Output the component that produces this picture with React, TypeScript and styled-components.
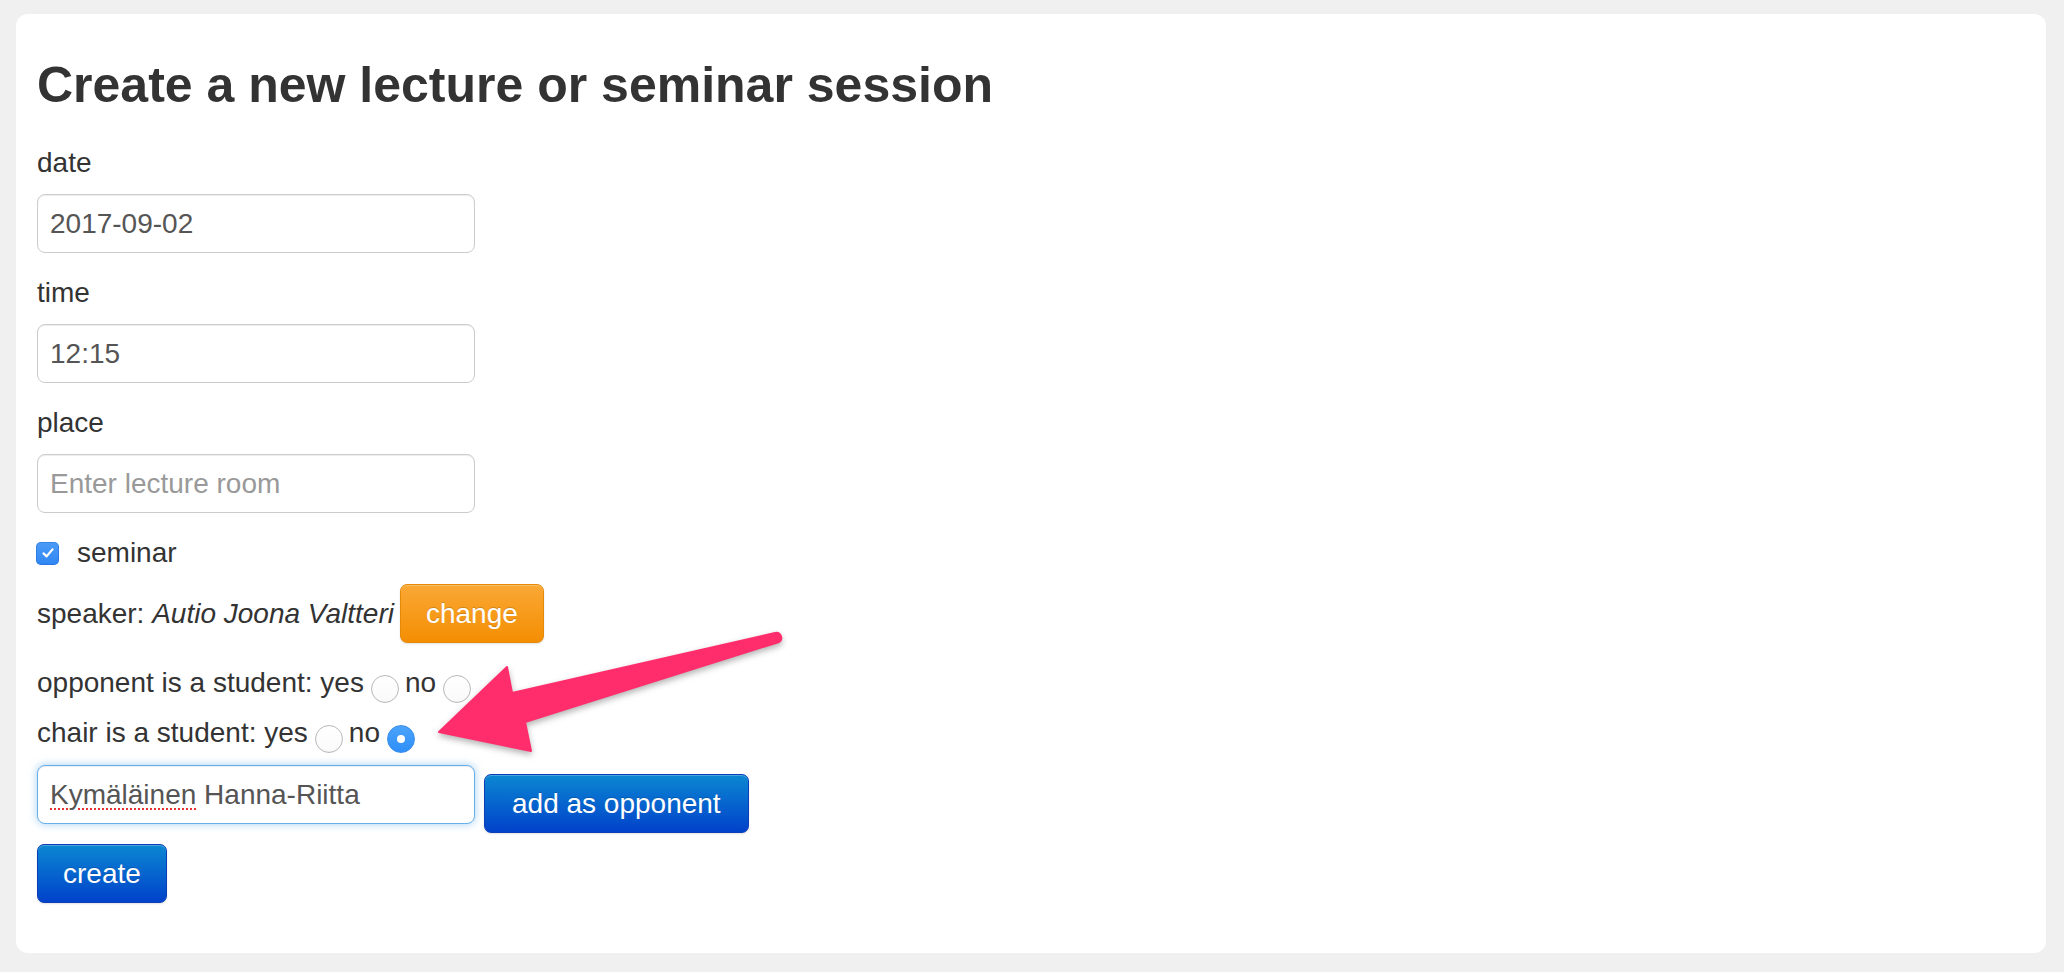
import React from "react";
import styled, { createGlobalStyle } from "styled-components";

const Global = createGlobalStyle`
  html, body {
    margin: 0;
    padding: 0;
    background: #f0f0f0;
  }
  body {
    font-family: "Liberation Sans", Arial, Helvetica, sans-serif;
    color: #333;
    font-size: 28px;
  }
  * { box-sizing: border-box; }
`;

const Page = styled.div`
  padding: 14px 18px 19px 16px;
`;

const Card = styled.div`
  position: relative;
  background: #fff;
  border-radius: 12px;
  padding: 44px 21px 50px 21px;
`;

const Title = styled.h1`
  margin: 0 0 30px 0;
  font-size: 50px;
  line-height: 55px;
  font-weight: 700;
  color: #333;
`;

const FormGroup = styled.div`
  margin-bottom: 20px;
`;

const Label = styled.label`
  display: block;
  line-height: 40px;
  margin-bottom: 11px;
  font-weight: 400;
`;

const TextInput = styled.input`
  display: block;
  width: 438px;
  height: 59px;
  padding: 0 12px;
  font: inherit;
  font-size: 28px;
  color: #555;
  background: #fff;
  border: 1px solid #ccc;
  border-radius: 8px;
  box-shadow: inset 0 1px 1px rgba(0, 0, 0, 0.075);
  outline: none;
  &::placeholder {
    color: #999;
  }
`;

const FocusedField = styled.div`
  display: flex;
  align-items: center;
  width: 438px;
  height: 59px;
  padding: 0 12px;
  font-size: 28px;
  color: #555;
  background: #fff;
  border: 1px solid #66afe9;
  border-radius: 8px;
  box-shadow: inset 0 1px 1px rgba(0, 0, 0, 0.075), 0 0 9px rgba(102, 175, 233, 0.6);
  white-space: pre;
`;

const Misspelled = styled.span`
  text-decoration: underline dotted #e8322f;
  text-decoration-thickness: 2px;
  text-underline-offset: 5px;
`;

const CheckRow = styled.div`
  display: flex;
  align-items: center;
  height: 40px;
  margin-bottom: 11px;
`;

const CheckBox = styled.span`
  display: inline-flex;
  align-items: center;
  justify-content: center;
  width: 23px;
  height: 23px;
  margin-left: -1px;
  margin-right: 18px;
  border-radius: 5px;
  background: linear-gradient(#4d9bf7, #2f86f2);
  box-shadow: inset 0 0 0 1px rgba(20, 90, 200, 0.35);
`;

const SpeakerRow = styled.div`
  display: flex;
  align-items: center;
  margin-bottom: 20px;
`;

const Name = styled.em`
  font-style: italic;
`;

const Button = styled.button<{ $tone: "orange" | "blue" }>`
  height: 59px;
  padding: 0 25px;
  font-family: inherit;
  font-size: 28px;
  line-height: 57px;
  color: #fff;
  border-radius: 7px;
  cursor: pointer;
  text-shadow: 0 -1px 0 rgba(0, 0, 0, 0.18);
  border: 1px solid ${(p) => (p.$tone === "orange" ? "#e58a07" : "#0a3fb8")};
  background: ${(p) =>
    p.$tone === "orange"
      ? "linear-gradient(#faa835, #f48e02)"
      : "linear-gradient(#0b87d2, #0142ca)"};
  box-shadow: inset 0 1px 0 rgba(255, 255, 255, 0.25), 0 1px 2px rgba(0, 0, 0, 0.12);
`;

const SpeakerButton = styled(Button)`
  margin-left: 6px;
`;

const OpponentButton = styled(Button)`
  margin-top: 9px;
  padding: 0 27px;
`;

const RadioLine = styled.div<{ $gap: number }>`
  display: flex;
  align-items: center;
  height: 40px;
  margin-bottom: ${(p) => p.$gap}px;
  white-space: pre;
`;

const Radio = styled.span<{ $checked?: boolean }>`
  display: inline-flex;
  align-items: center;
  justify-content: center;
  width: 28px;
  height: 28px;
  margin: 12px 6px 0 7px;
  border-radius: 50%;
  ${(p) =>
    p.$checked
      ? `background: linear-gradient(#4aa3fc, #2f8ff8); border: 1px solid #3a8ee8;`
      : `background: linear-gradient(#ffffff, #fafafa); border: 1px solid #b9b9b9; box-shadow: inset 0 -1px 1px rgba(0,0,0,0.04);`}
`;

const RadioDot = styled.span`
  width: 8px;
  height: 8px;
  border-radius: 50%;
  background: #fff;
`;

const InputRow = styled.div`
  display: flex;
  align-items: flex-start;
  gap: 9px;
  margin-bottom: 11px;
`;

const Arrow = styled.svg`
  position: absolute;
  left: 404px;
  top: 606px;
  width: 380px;
  height: 150px;
  overflow: visible;
  filter: drop-shadow(0 3px 3px rgba(0, 0, 0, 0.3));
  pointer-events: none;
`;

export default function App() {
  return (
    <>
      <Global />
      <Page>
        <Card>
          <Title>Create a new lecture or seminar session</Title>
          <FormGroup>
            <Label>date</Label>
            <TextInput defaultValue="2017-09-02" />
          </FormGroup>
          <FormGroup>
            <Label>time</Label>
            <TextInput defaultValue="12:15" />
          </FormGroup>
          <FormGroup>
            <Label>place</Label>
            <TextInput placeholder="Enter lecture room" />
          </FormGroup>
          <CheckRow>
            <CheckBox>
              <svg width="14" height="14" viewBox="0 0 14 14">
                <path d="M2.5 7.4 L5.6 10.4 L11.5 3.4" fill="none" stroke="#fff" strokeWidth="2.2" strokeLinecap="round" strokeLinejoin="round" />
              </svg>
            </CheckBox>
            seminar
          </CheckRow>
          <SpeakerRow>
            <span>
              speaker: <Name>Autio Joona Valtteri</Name>
            </span>
            <SpeakerButton $tone="orange">change</SpeakerButton>
          </SpeakerRow>
          <RadioLine $gap={10}>
            opponent is a student: yes
            <Radio />
            no
            <Radio />
          </RadioLine>
          <RadioLine $gap={12}>
            chair is a student: yes
            <Radio />
            no
            <Radio $checked>
              <RadioDot />
            </Radio>
          </RadioLine>
          <InputRow>
            <FocusedField role="textbox">
              <Misspelled>Kymäläinen</Misspelled> Hanna-Riitta
            </FocusedField>
            <OpponentButton $tone="blue">add as opponent</OpponentButton>
          </InputRow>
          <Button $tone="blue">create</Button>
          <Arrow viewBox="0 0 380 150">
            <path
              d="M19 112 L87 47 L92 73 L355 13 A5 5 0 0 1 359 22 L105 102 L111 131 Z"
              fill="#ff2d6c"
              stroke="#ff2d6c"
              strokeWidth="2"
              strokeLinejoin="round"
            />
          </Arrow>
        </Card>
      </Page>
    </>
  );
}
